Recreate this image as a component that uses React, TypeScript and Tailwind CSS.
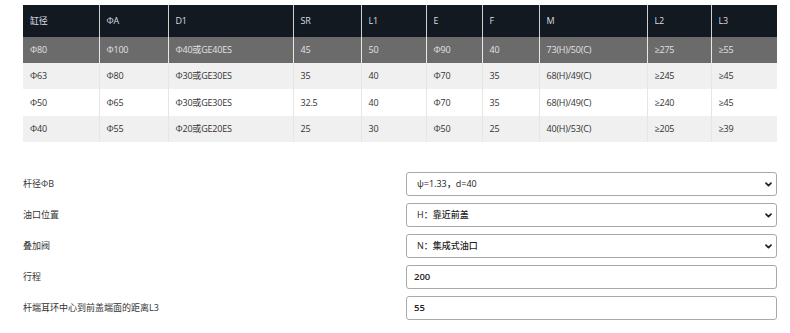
import React from "react";

const cols = [76, 69, 125, 68, 65, 56, 57, 108, 64, 66];
const headers = ["缸径", "ΦA", "D1", "SR", "L1", "E", "F", "M", "L2", "L3"];
const rows = [
  ["Φ80", "Φ100", "Φ40或GE40ES", "45", "50", "Φ90", "40", "73(H)/50(C)", "≥275", "≥55"],
  ["Φ63", "Φ80", "Φ30或GE30ES", "35", "40", "Φ70", "35", "68(H)/49(C)", "≥245", "≥45"],
  ["Φ50", "Φ65", "Φ30或GE30ES", "32.5", "40", "Φ70", "35", "68(H)/49(C)", "≥240", "≥45"],
  ["Φ40", "Φ55", "Φ20或GE20ES", "25", "30", "Φ50", "25", "40(H)/53(C)", "≥205", "≥39"],
];
const rowH = ["h-[26px]", "h-[26px]", "h-[27px]", "h-[26px]"];
const rowBg = ["bg-[#6b6b6b] text-[#e2e2e2]", "bg-[#f0f0f0] text-[#333]", "bg-white text-[#333]", "bg-[#f0f0f0] text-[#333]"];

function Chevron() {
  return (
    <svg width="7" height="5" viewBox="0 0 7 5" className="shrink-0">
      <polyline points="1,1.2 3.5,3.7 6,1.2" fill="none" stroke="#222" strokeWidth="1.7" strokeLinecap="round" strokeLinejoin="round" />
    </svg>
  );
}

function SelectBox({ value }: { value: string }) {
  return (
    <div className="flex h-[24px] w-[371px] items-center justify-between rounded-[3px] border border-[#a9a9a9] bg-white pl-[10px] pr-[4px] text-[9px] font-medium text-[#222]">
      <span>{value}</span>
      <Chevron />
    </div>
  );
}

function InputBox({ value }: { value: string }) {
  return (
    <div className="flex h-[24px] w-[371px] items-center rounded-[3px] border border-[#a9a9a9] bg-white pl-[7px] text-[9.5px] font-semibold text-[#222]">
      {value}
    </div>
  );
}

export default function App() {
  const form: [string, React.ReactNode][] = [
    ["杆径ΦB", <SelectBox value="ψ=1.33，d=40" />],
    ["油口位置", <SelectBox value="H：靠近前盖" />],
    ["叠加阀", <SelectBox value="N：集成式油口" />],
    ["行程", <InputBox value="200" />],
    ["杆端耳环中心到前盖端面的距离L3", <InputBox value="55" />],
  ];
  return (
    <div
      className="h-[333px] w-[790px] bg-white pl-[23px] pt-[5px]"
      style={{ fontFamily: '"Open Sans", "Noto Sans CJK SC", sans-serif' }}
    >
      <table className="w-[754px] table-fixed border-collapse text-[9px] tracking-[-0.2px]">
        <colgroup>
          {cols.map((w, i) => (
            <col key={i} style={{ width: w }} />
          ))}
        </colgroup>
        <thead>
          <tr className="h-[32px] bg-[#131921] text-[#d6dde3]">
            {headers.map((h, i) => (
              <th key={i} className={`px-[7px] text-left font-normal ${i > 0 ? "border-l border-[#d0d0d0]" : ""}`}>
                {h}
              </th>
            ))}
          </tr>
        </thead>
        <tbody>
          {rows.map((r, ri) => (
            <tr key={ri} className={`${rowH[ri]} ${rowBg[ri]}`}>
              {r.map((c, ci) => (
                <td
                  key={ci}
                  className={`px-[7px] ${ci > 0 ? (ri === 0 ? "border-l border-[#e8e8e8]" : "border-l border-[#e6e6e6]") : ""}`}
                >
                  {c}
                </td>
              ))}
            </tr>
          ))}
        </tbody>
      </table>

      <div className="mt-[30px] flex flex-col gap-[7px]">
        {form.map(([label, ctrl], i) => (
          <div key={i} className="flex items-center">
            <div className="w-[383px] text-[9px] text-[#333]">{label}</div>
            {ctrl}
          </div>
        ))}
      </div>
    </div>
  );
}
